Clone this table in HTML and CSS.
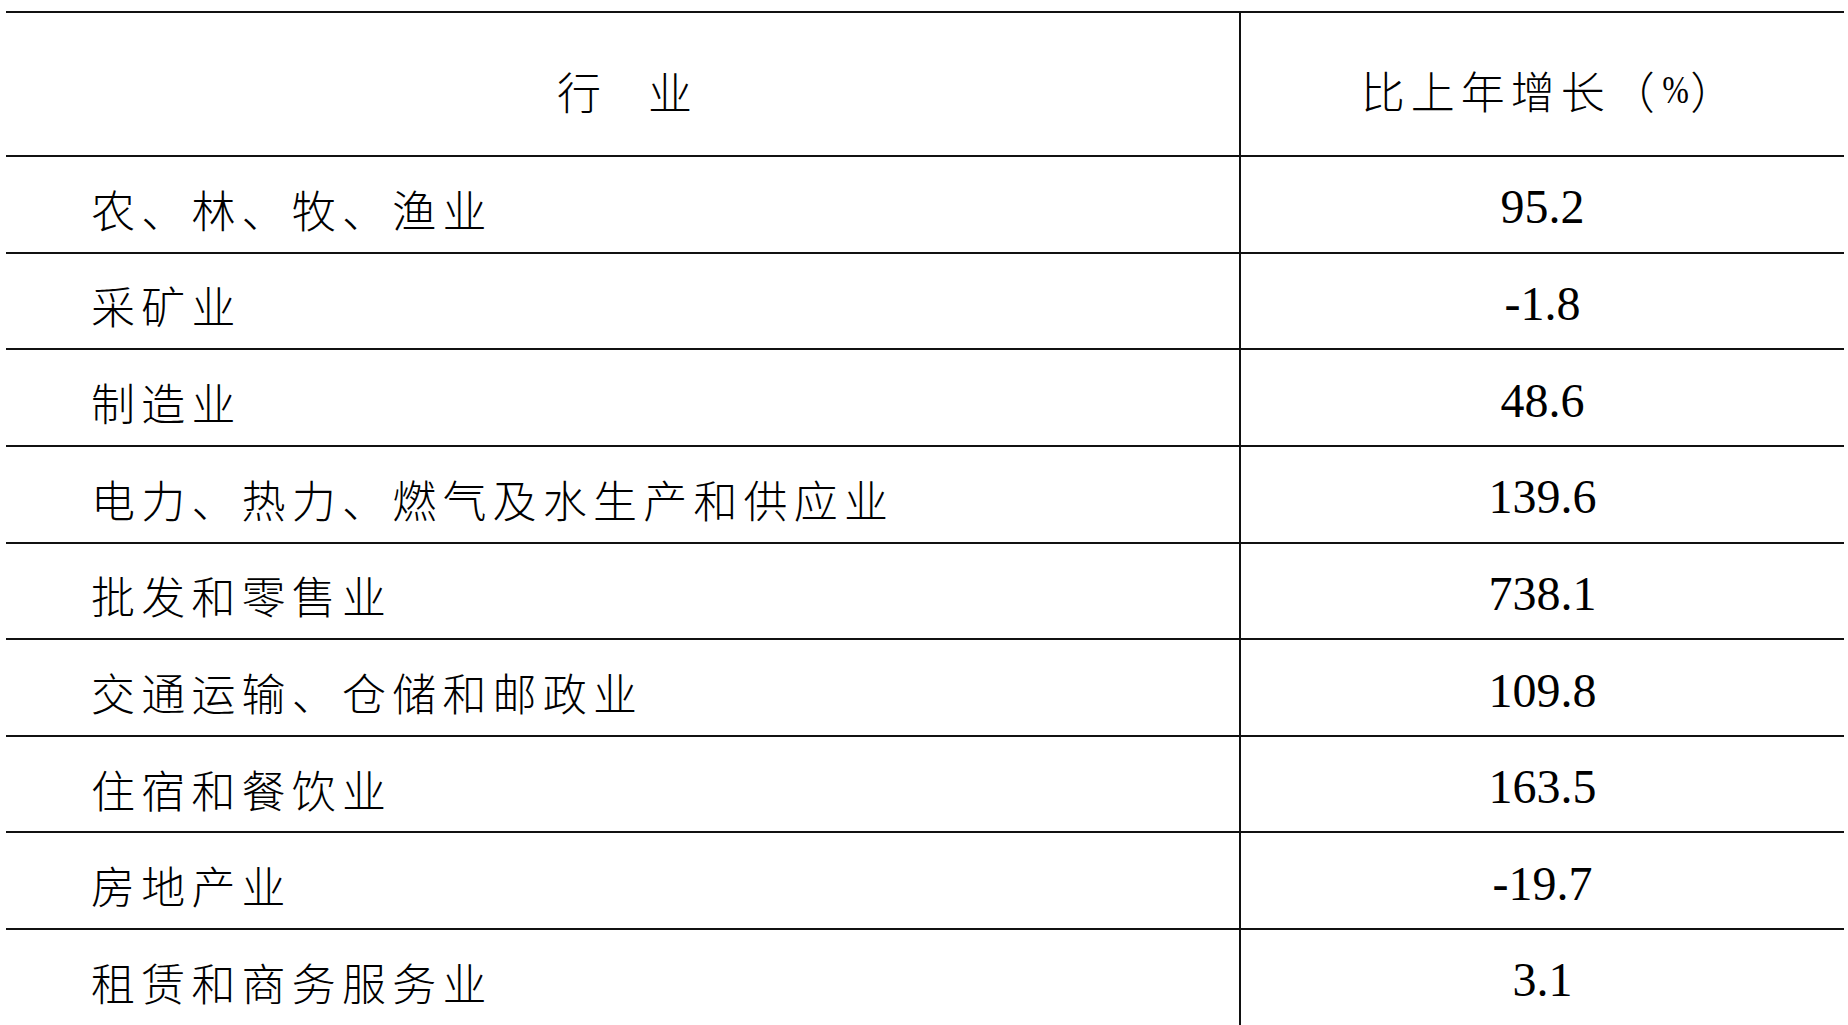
FILE: index.html
```html
<!DOCTYPE html>
<html lang="zh-CN">
<head>
<meta charset="utf-8">
<title>行业增长</title>
<link rel="stylesheet" href="styles.css">
</head>
<body>
<div class="table">
  <div class="cell head name"><span>行</span><span>业</span></div>
  <div class="cell head value"><span class="cjk">比上年增长（</span><span class="pct">%</span><span class="cjk">）</span></div>

  <div class="cell name">农、林、牧、渔业</div><div class="cell value">95.2</div>
  <div class="cell name">采矿业</div><div class="cell value">-1.8</div>
  <div class="cell name">制造业</div><div class="cell value">48.6</div>
  <div class="cell name">电力、热力、燃气及水生产和供应业</div><div class="cell value">139.6</div>
  <div class="cell name">批发和零售业</div><div class="cell value">738.1</div>
  <div class="cell name">交通运输、仓储和邮政业</div><div class="cell value">109.8</div>
  <div class="cell name">住宿和餐饮业</div><div class="cell value">163.5</div>
  <div class="cell name">房地产业</div><div class="cell value">-19.7</div>
  <div class="cell name">租赁和商务服务业</div><div class="cell value">3.1</div>
</div>
</body>
</html>
```

FILE: styles.css
```css
html, body {
  margin: 0;
  padding: 0;
  background: #ffffff;
}

body {
  padding: 11px 4px 0 6px;
  overflow: hidden;
  height: 1025px;
  box-sizing: border-box;
}

.table {
  display: grid;
  grid-template-columns: 1235px 1fr;
  grid-template-rows: 144px repeat(9, 96.65px);
  border-top: 2px solid #111;
  color: #000;
}

.cell {
  display: flex;
  align-items: center;
  border-bottom: 2px solid #111;
  box-sizing: border-box;
  white-space: nowrap;
}

.name {
  border-right: 2px solid #111;
  font-family: "Noto Sans CJK SC", "Noto Sans", sans-serif;
  font-weight: 300;
  font-size: 44px;
  letter-spacing: 6.2px;
  line-height: 1;
  padding: 9px 0 0 85px;
}

.value {
  justify-content: center;
  font-family: "Liberation Serif", "Times New Roman", serif;
  font-size: 48px;
  line-height: 1;
  padding: 6px 0 0 0;
}

.head.name {
  justify-content: center;
  padding: 13px 0 0 4px;
  gap: 47px;
  letter-spacing: 0;
}

.head.value {
  padding: 12px 0 0 16px;
}

.head.value .cjk {
  font-family: "Noto Sans CJK SC", "Noto Sans", sans-serif;
  font-weight: 300;
  font-size: 44px;
  letter-spacing: 6px;
}

.head.value .pct {
  font-family: "Liberation Serif", "Times New Roman", serif;
  font-size: 40px;
  transform: scaleX(0.8);
  margin: 0 -2px;
}
```
